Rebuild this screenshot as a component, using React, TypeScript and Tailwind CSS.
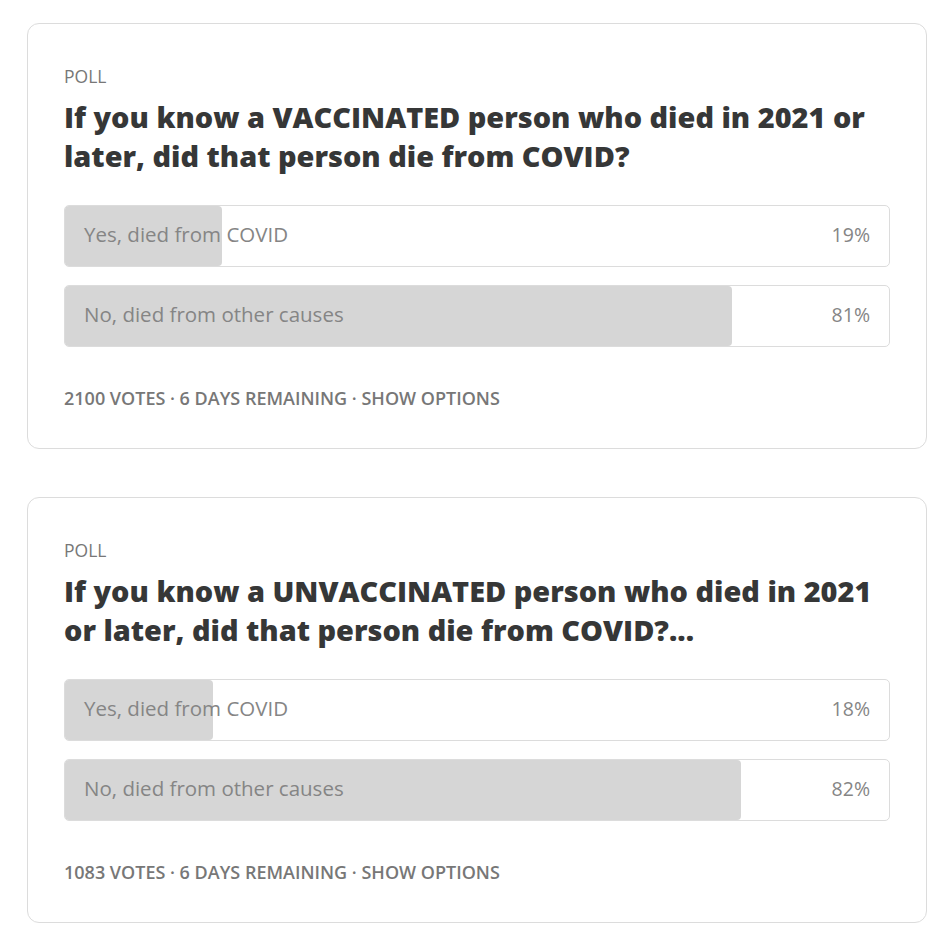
const polls = [
  {
    title: 'If you know a VACCINATED person who died in 2021 or later, did that person die from COVID?',
    options: [
      { label: 'Yes, died from COVID', pct: 19 },
      { label: 'No, died from other causes', pct: 81 },
    ],
    votes: 2100,
  },
  {
    title: 'If you know a UNVACCINATED person who died in 2021 or later, did that person die from COVID?...',
    options: [
      { label: 'Yes, died from COVID', pct: 18 },
      { label: 'No, died from other causes', pct: 82 },
    ],
    votes: 1083,
  },
];

function Poll({ poll }: { poll: (typeof polls)[number] }) {
  return (
    <div className="rounded-[12px] border border-[#dcdcdc] bg-white px-[36px] pt-[42px] pb-[38px]">
      <div className="text-[17.5px] leading-[20px] font-medium text-[#777] uppercase">Poll</div>
      <h2 className="mt-[11px] text-[28.9px] leading-[39px] font-extrabold text-[#363737]">{poll.title}</h2>

      <div className="mt-[30px] flex flex-col gap-[18px]">
        {poll.options.map((o) => (
          <div key={o.label} className="relative h-[62px] rounded-[5px] border border-[#dcdcdc] bg-white">
            <div
              className="absolute inset-y-0 left-0 rounded-[4px] bg-[#d6d6d6]"
              style={{ width: `${o.pct}%` }}
            />
            <div className="relative flex h-full items-center justify-between px-[19px] pb-[3px] text-[20.5px] text-[#858585]">
              <span>{o.label}</span>
              <span className="text-[19.5px]">{o.pct}%</span>
            </div>
          </div>
        ))}
      </div>

      <div className="mt-[39px] text-[18px] leading-[24px] font-semibold text-[#777] uppercase">
        {poll.votes} votes · 6 days remaining · Show options
      </div>
    </div>
  );
}

export default function App() {
  return (
    <div
      className="min-h-screen bg-white pt-[23px] pl-[27px] pr-[14px] flex flex-col gap-[48px]"
      style={{ fontFamily: '"Open Sans", "Noto Sans", sans-serif' }}
    >
      {polls.map((p) => (
        <Poll key={p.votes} poll={p} />
      ))}
    </div>
  );
}
